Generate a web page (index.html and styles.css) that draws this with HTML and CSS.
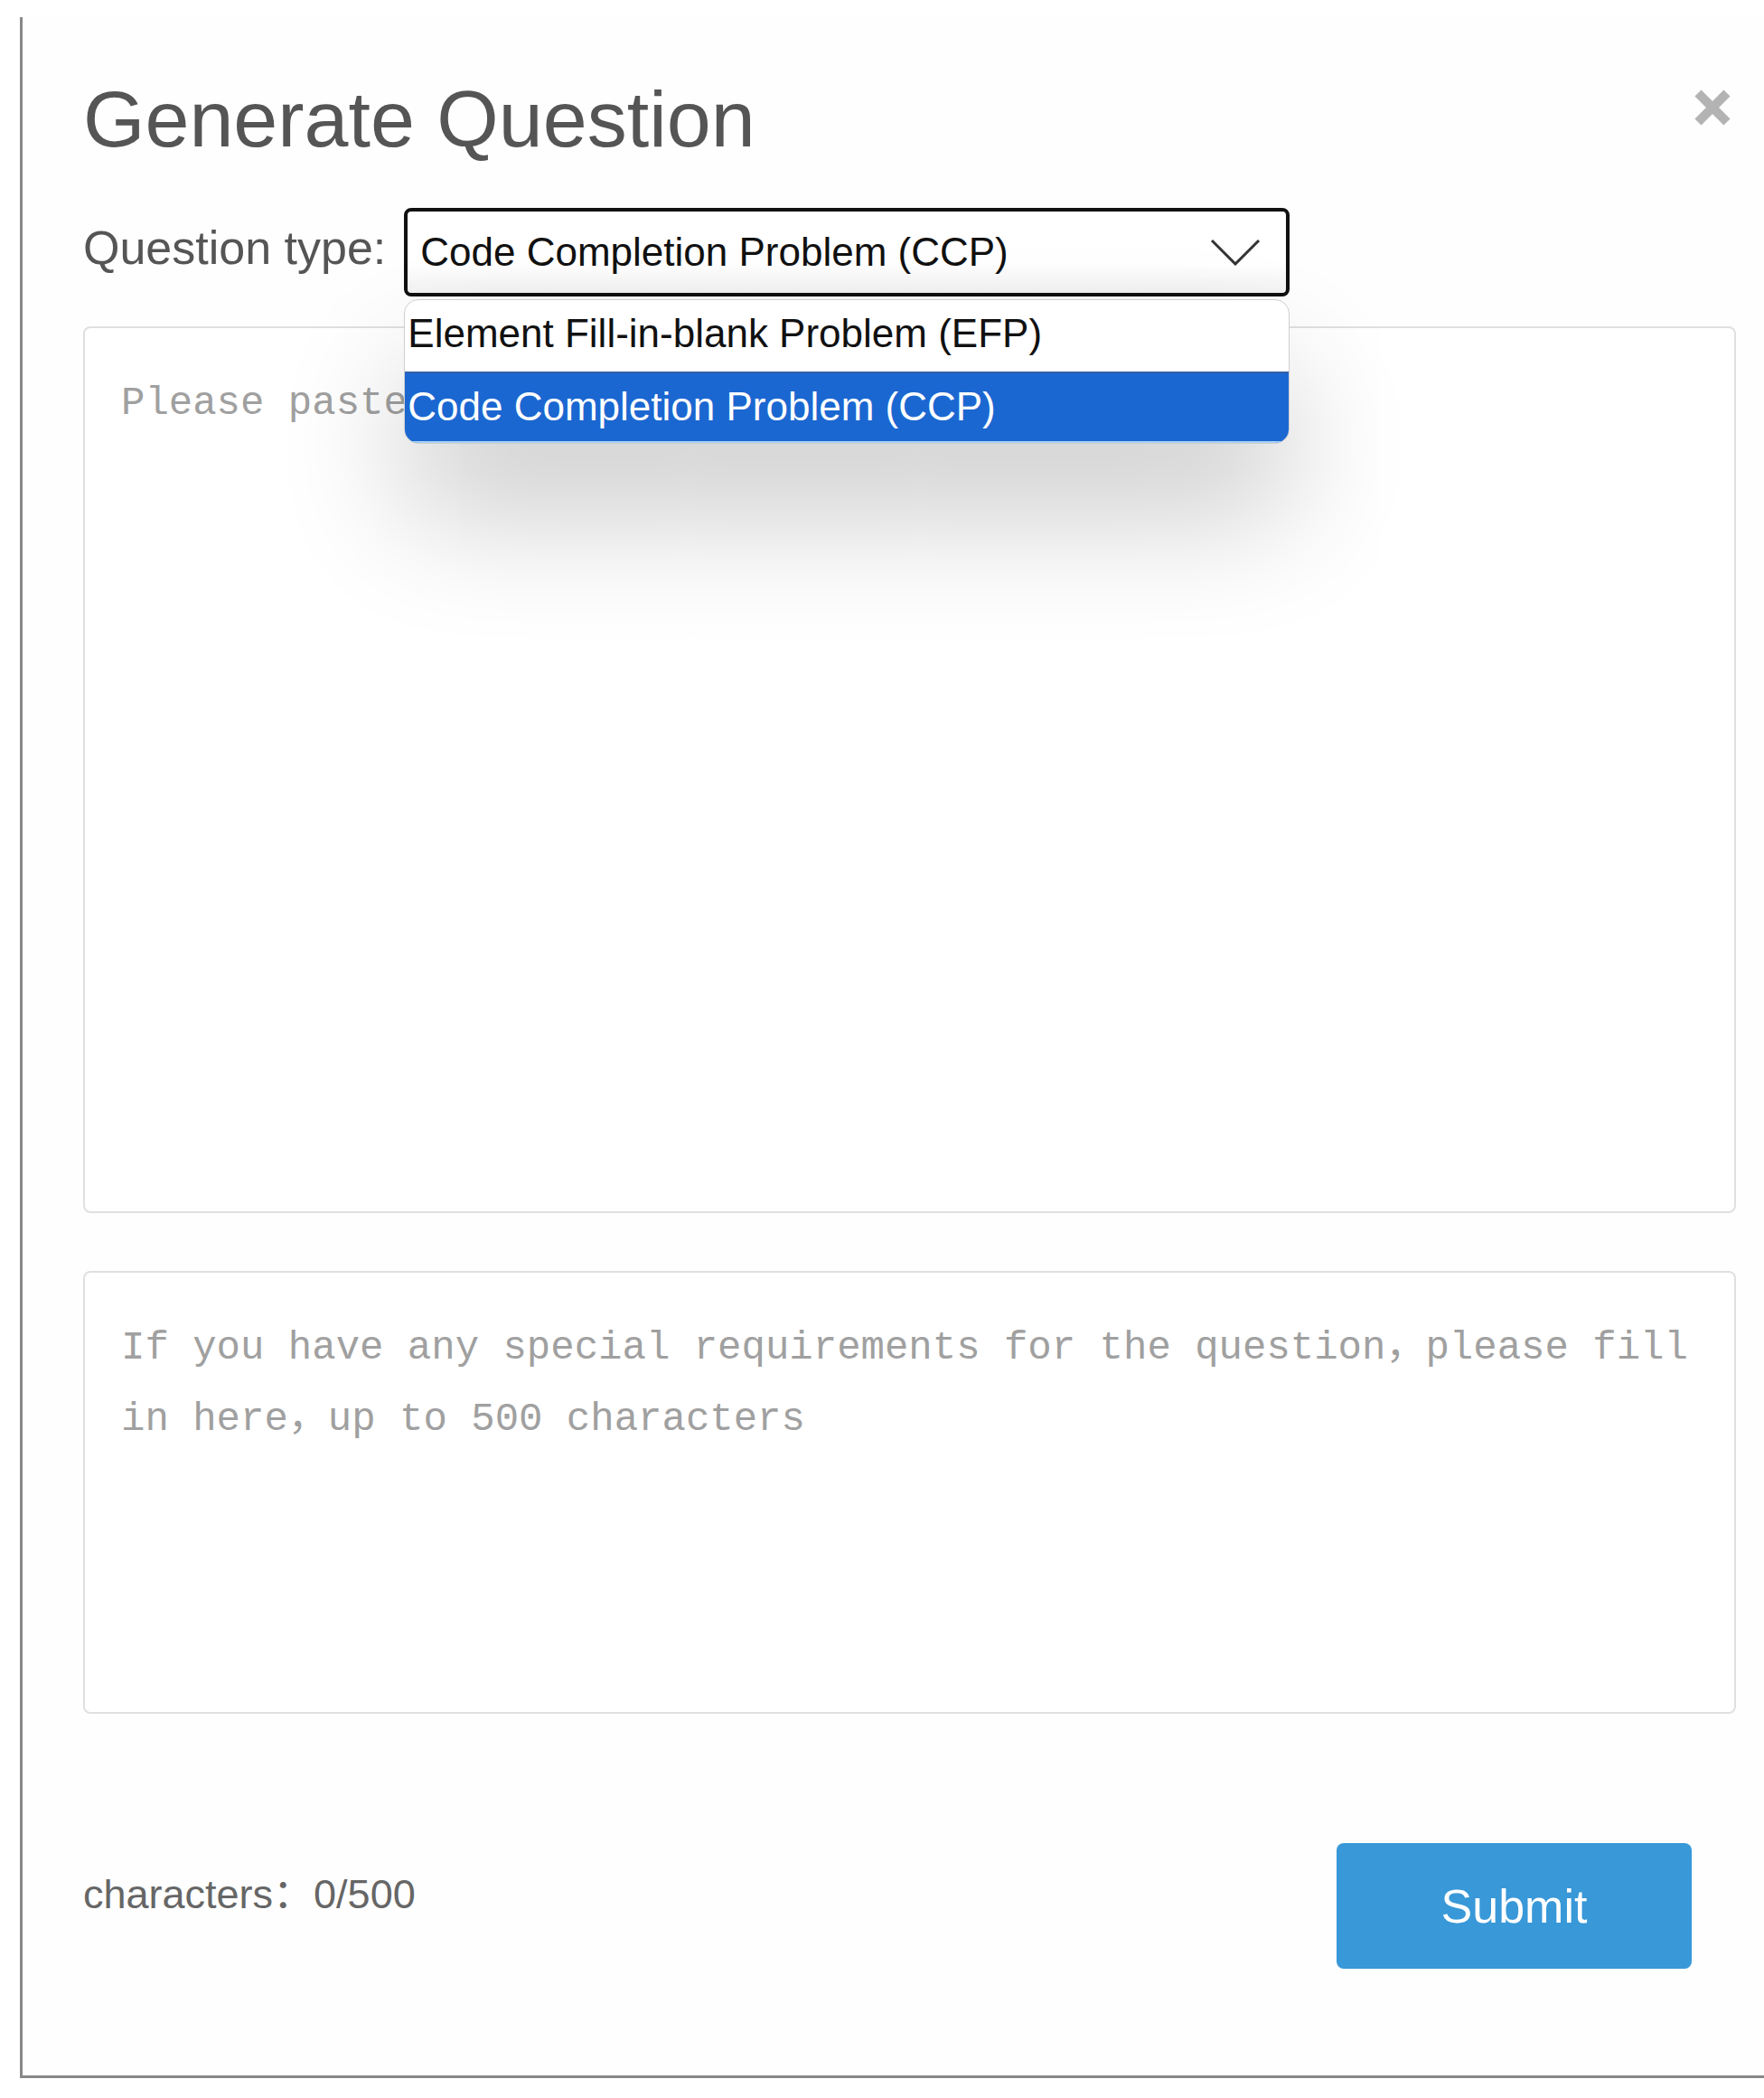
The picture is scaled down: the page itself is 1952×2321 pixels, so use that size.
FILE: index.html
```html
<!DOCTYPE html>
<html lang="en">
<head>
    <meta charset="UTF-8">
    <meta name="viewport" content="width=device-width, initial-scale=1.0">
    <title>Generate Question</title>
    <link rel="stylesheet" href="styles.css">
</head>
<body>
    <div class="dialog">
        <div class="dialog-header">
            <h1>Generate Question</h1>
            <button class="close-btn" aria-label="Close">
                <svg width="44" height="42" viewBox="0 0 44 42">
                    <path d="M6 5 L38 37 M38 5 L6 37" stroke="#b3b3b3" stroke-width="10" fill="none"/>
                </svg>
            </button>
        </div>

        <div class="type-row">
            <label class="type-label">Question type:</label>
            <div class="select-wrap">
                <div class="select-box">
                    <span>Code Completion Problem (CCP)</span>
                    <svg width="56" height="30" viewBox="0 0 56 30">
                        <polyline points="2,2 28,28 54,2" stroke="#333" stroke-width="3" fill="none"/>
                    </svg>
                </div>
                <ul class="select-options">
                    <li>Element Fill-in-blank Problem (EFP)</li>
                    <li class="selected">Code Completion Problem (CCP)</li>
                </ul>
            </div>
        </div>

        <textarea class="code-input" placeholder="Please paste your code here"></textarea>
        <textarea class="req-input" placeholder="If you have any special requirements for the question，please fill in here，up to 500 characters"></textarea>

        <div class="dialog-footer">
            <span class="char-count">characters：0/500</span>
            <button class="submit-btn">Submit</button>
        </div>
    </div>
</body>
</html>
```

FILE: styles.css
```css
body {
    margin: 0;
    background-color: #fff;
    font-family: "Liberation Sans", Arial, "Noto Sans CJK SC", sans-serif;
}
.dialog {
    box-sizing: border-box;
    margin: 19px 0 0 22px;
    height: 2280px;
    padding: 69px 31px 0 67px;
    background-color: #fefefe;
    border-left: 3px solid #888;
    border-bottom: 3px solid #888;
}
.dialog-header {
    display: flex;
    justify-content: space-between;
    align-items: flex-start;
}
h1 {
    margin: 0;
    font-size: 88px;
    line-height: 88px;
    font-weight: normal;
    color: #555;
}
.close-btn {
    margin: 10px 4px 0 0;
    padding: 0;
    border: none;
    background: none;
    line-height: 0;
    cursor: pointer;
}
.type-row {
    display: flex;
    align-items: baseline;
    gap: 20px;
    margin-top: 54px;
}
.type-label {
    position: relative;
    top: -2px;
    font-size: 52px;
    line-height: 52px;
    color: #555;
}
.select-wrap {
    position: relative;
    width: 980px;
}
.select-box {
    box-sizing: border-box;
    height: 98px;
    display: flex;
    align-items: center;
    justify-content: space-between;
    padding: 0 28px 0 14px;
    border: 4px solid #111;
    border-radius: 8px;
    background: linear-gradient(#fff 65%, #f2f2f2);
    font-size: 44px;
    line-height: 44px;
    color: #111;
}
.select-options {
    position: absolute;
    top: 101px;
    left: 0;
    right: 0;
    z-index: 10;
    margin: 0;
    padding: 0;
    list-style: none;
    background-color: #fff;
    border: 1px solid #cfcfcf;
    border-radius: 16px;
    overflow: hidden;
    box-shadow: 0 80px 140px rgba(0,0,0,0.2);
}
.select-options li {
    height: 79px;
    box-sizing: border-box;
    padding: 0 0 5px 3px;
    font-size: 44px;
    line-height: 74px;
    color: #111;
    white-space: nowrap;
}
.select-options li.selected {
    background-color: #1b67d1;
    color: #fff;
    border-top: 2px solid #3560a8;
    border-bottom: 2px solid #a6d0f5;
}
textarea {
    display: block;
    box-sizing: border-box;
    width: 100%;
    padding: 44px 30px 0 40px;
    border: 2px solid #e0e0e0;
    border-radius: 8px;
    background-color: #fff;
    font-family: "Liberation Mono", "Courier New", "Noto Sans CJK SC", monospace;
    font-size: 44px;
    line-height: 79px;
    color: #333;
    resize: none;
    outline: none;
}
textarea::placeholder {
    color: #a0a0a0;
}
.code-input {
    margin-top: 33px;
    height: 981px;
}
.req-input {
    margin-top: 64px;
    height: 490px;
}
.dialog-footer {
    display: flex;
    justify-content: space-between;
    align-items: flex-start;
    margin-top: 143px;
}
.char-count {
    margin-top: 34px;
    font-size: 45px;
    line-height: 45px;
    color: #666;
}
.submit-btn {
    width: 393px;
    height: 139px;
    margin-right: 49px;
    border: none;
    border-radius: 8px;
    background-color: #3898d8;
    color: #fff;
    font-family: "Liberation Sans", Arial, sans-serif;
    font-size: 52px;
    cursor: pointer;
}
```
